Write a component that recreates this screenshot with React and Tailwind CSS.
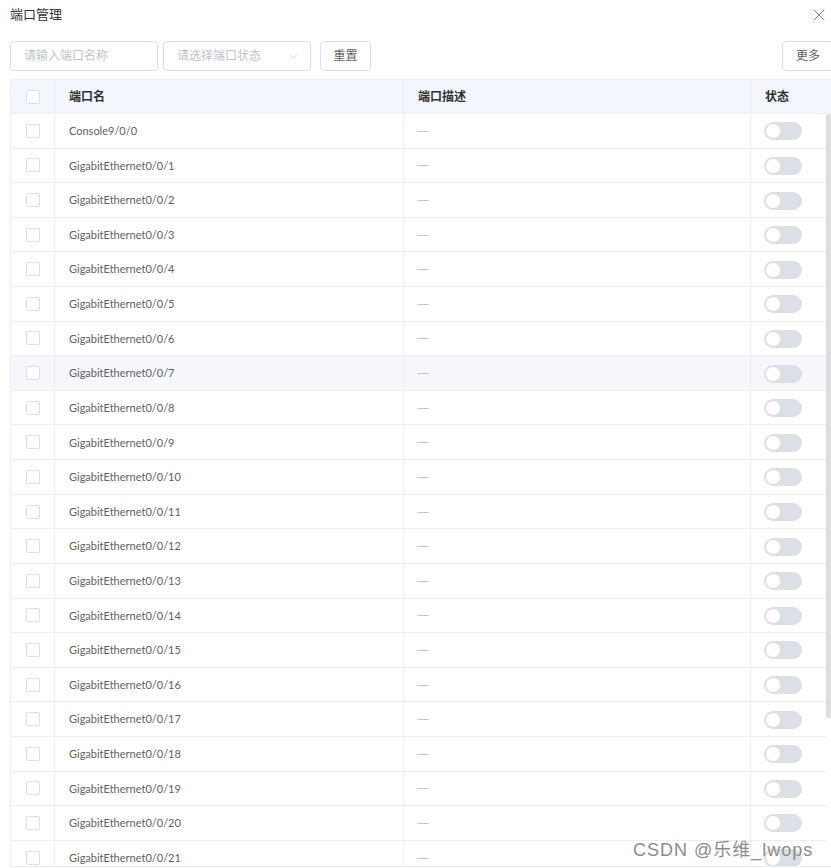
import { X, ChevronDown } from 'lucide-react'

const ROWS = ['Console9/0/0', ...Array.from({ length: 21 }, (_, i) => `GigabitEthernet0/0/${i + 1}`)]

const cjk = "font-['Lato','Noto_Sans_CJK_SC',sans-serif]"

function Checkbox() {
  return <span className="block w-[14px] h-[14px] rounded-[2px] border border-[#dcdfe6] bg-white" />
}

function Toggle() {
  return (
    <span className="flex items-center w-[38px] h-[18px] rounded-full bg-[#dcdfe6] px-[2px]">
      <span className="block w-[14px] h-[14px] rounded-full bg-white" />
    </span>
  )
}

function App() {
  return (
    <div className={`relative w-[831px] h-[868px] overflow-hidden bg-white text-[12px] ${cjk}`}>
      {/* Title */}
      <div className="flex items-center justify-between h-[29px] pl-[10px] pr-[2px]">
        <span className="text-[13px] text-[#303133]">端口管理</span>
        <X size={20} strokeWidth={1.1} className="text-[#7a7d83]" />
      </div>

      {/* Filters */}
      <div className="flex items-center mt-[12px] pl-[10px] h-[30px]">
        <div className="w-[148px] h-[30px] border border-[#dcdfe6] rounded-[4px] flex items-center px-[13px] text-[#c0c4cc]">
          请输入端口名称
        </div>
        <div className="ml-[5px] w-[148px] h-[30px] border border-[#dcdfe6] rounded-[4px] flex items-center justify-between pl-[13px] pr-[10px] text-[#c0c4cc]">
          <span>请选择端口状态</span>
          <ChevronDown size={13} strokeWidth={1.3} className="text-[#c0c4cc]" />
        </div>
        <div className="ml-[9px] w-[51px] h-[30px] border border-[#dcdfe6] rounded-[4px] flex items-center justify-center text-[#606266]">
          重置
        </div>
        <div className="ml-auto w-[52px] shrink-0 h-[30px] border border-[#dcdfe6] rounded-[4px] flex items-center pl-[13px] text-[#606266] translate-x-[3px]">
          更多
        </div>
      </div>

      {/* Table */}
      <div className="mt-[8px] ml-[10px] w-[821px] border-l border-t border-[#ebeef5]">
        <div className="flex h-[34px] bg-[#f3f6fc] border-b border-[#ebeef5] font-bold text-[#303133]">
          <div className="w-[44px] shrink-0 flex items-center justify-center border-r border-[#ebeef5]">
            <Checkbox />
          </div>
          <div className="w-[349px] shrink-0 flex items-center pl-[14px] border-r border-[#ebeef5]">端口名</div>
          <div className="w-[347px] shrink-0 flex items-center pl-[14px] border-r border-[#ebeef5]">端口描述</div>
          <div className="flex-1 flex items-center pl-[14px]">状态</div>
        </div>

        <div className="flex h-[753px] border-b border-[#ebeef5] overflow-hidden">
          <div className="flex-1 flex flex-col">
            {ROWS.map((name, i) => (
              <div
                key={name}
                className={`flex shrink-0 h-[34.62px] border-b border-[#ebeef5] text-[#606266] ${i === 7 ? 'bg-[#f5f7fa]' : 'bg-white'}`}
              >
                <div className="w-[44px] shrink-0 flex items-center justify-center border-r border-[#ebeef5]">
                  <Checkbox />
                </div>
                <div className="w-[349px] shrink-0 flex items-center pl-[14px] pt-[1px] text-[11px] border-r border-[#ebeef5]">{name}</div>
                <div className="w-[347px] shrink-0 flex items-center pl-[13px] border-r border-[#ebeef5] text-[#c0c4cc] font-['Noto_Sans',sans-serif]">—</div>
                <div className="flex-1 flex items-center pl-[13px] pt-[1px]">
                  <Toggle />
                </div>
              </div>
            ))}
          </div>
          <div className="w-[5px] shrink-0 flex flex-col">
            <div className="h-[604px] rounded-full bg-[#dcdde0]" />
          </div>
        </div>
      </div>

      {/* Watermark */}
      <div className="absolute left-[633px] top-[838px] text-[18px] leading-[24px] tracking-[1px] text-[#8c8c8c] font-['Liberation_Sans','Noto_Sans_CJK_SC',sans-serif] whitespace-nowrap">
        CSDN @乐维_lwops
      </div>
    </div>
  )
}

export default App
